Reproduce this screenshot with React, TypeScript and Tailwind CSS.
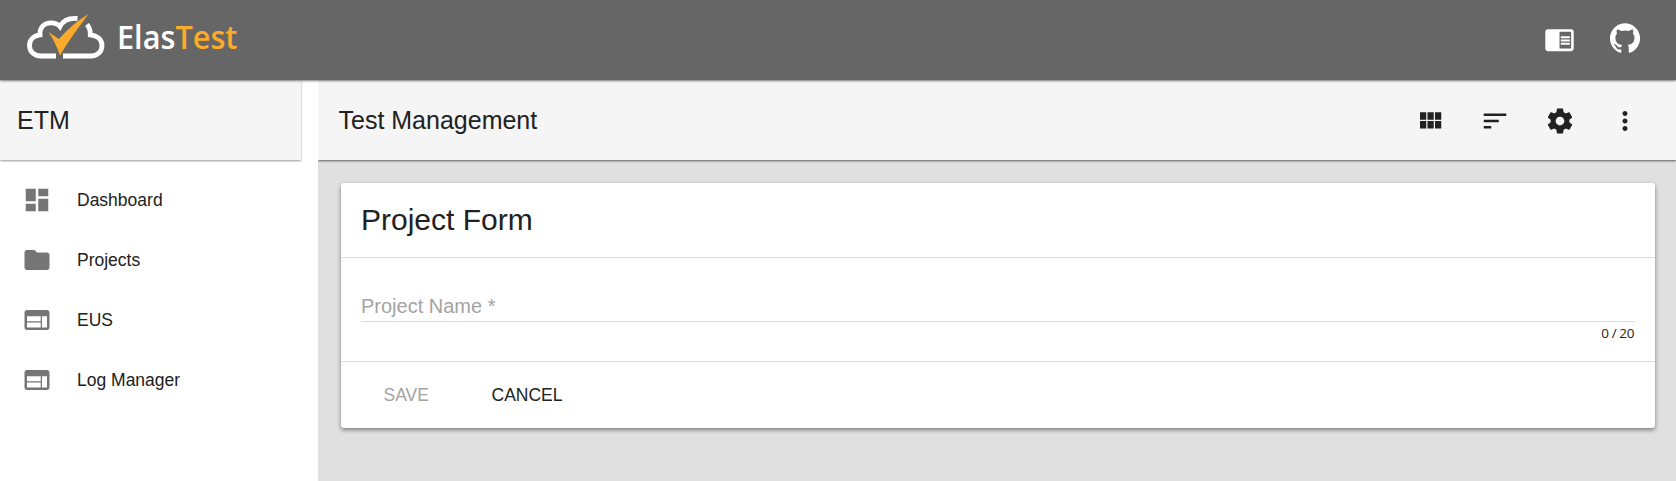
import React from "react";
import { MdChromeReaderMode, MdDashboard, MdFolder, MdMoreVert, MdSort, MdWeb } from "react-icons/md";

const navItems = [
  { label: "Dashboard", Icon: MdDashboard },
  { label: "Projects", Icon: MdFolder },
  { label: "EUS", Icon: MdWeb },
  { label: "Log Manager", Icon: MdWeb },
];

function ModuleIcon() {
  return (
    <svg viewBox="0 0 24 24" className="size-[30px]" fill="currentColor">
      <path d="M4 11h5V5H4v6zm0 7h5v-6H4v6zm6 0h5v-6h-5v6zm6 0h5v-6h-5v6zm-6-7h5V5h-5v6zm6-6v6h5V5h-5z" />
    </svg>
  );
}

function GearIcon() {
  return (
    <svg viewBox="0 0 24 24" className="size-[30px]" fill="currentColor">
      <path d="M19.43 12.98c.04-.32.07-.64.07-.98s-.03-.66-.07-.98l2.11-1.65c.19-.15.24-.42.12-.64l-2-3.46c-.12-.22-.39-.3-.61-.22l-2.49 1c-.52-.4-1.08-.73-1.69-.98l-.38-2.65C14.46 2.18 14.25 2 14 2h-4c-.25 0-.46.18-.49.42l-.38 2.65c-.61.25-1.17.59-1.69.98l-2.49-1c-.23-.09-.49 0-.61.22l-2 3.46c-.13.22-.07.49.12.64l2.11 1.65c-.04.32-.07.65-.07.98s.03.66.07.98l-2.11 1.65c-.19.15-.24.42-.12.64l2 3.46c.12.22.39.3.61.22l2.49-1c.52.4 1.08.73 1.69.98l.38 2.65c.03.24.24.42.49.42h4c.25 0 .46-.18.49-.42l.38-2.65c.61-.25 1.17-.59 1.69-.98l2.49 1c.23.09.49 0 .61-.22l2-3.46c.12-.22.07-.49-.12-.64l-2.11-1.65zM12 15.5c-1.93 0-3.5-1.57-3.5-3.5s1.57-3.5 3.5-3.5 3.5 1.57 3.5 3.5-1.57 3.5-3.5 3.5z" />
    </svg>
  );
}

function GithubIcon() {
  return (
    <svg viewBox="0 0 24 24" className="size-[30px]" fill="currentColor">
      <path d="M12 .3a12 12 0 0 0-3.8 23.4c.6.1.8-.3.8-.6v-2c-3.3.7-4-1.6-4-1.6-.6-1.4-1.4-1.8-1.4-1.8-1-.7.1-.7.1-.7 1.2 0 1.9 1.2 1.9 1.2 1 1.8 2.8 1.3 3.5 1 0-.8.4-1.3.7-1.6-2.7-.3-5.5-1.3-5.5-6 0-1.2.5-2.3 1.3-3.1-.2-.4-.6-1.6 0-3.2 0 0 1-.3 3.4 1.2a11.5 11.5 0 0 1 6 0c2.3-1.5 3.3-1.2 3.3-1.2.6 1.6.2 2.8 0 3.2.9.8 1.3 1.9 1.3 3.2 0 4.6-2.8 5.6-5.5 5.9.5.4.9 1 .9 2.2v3.3c0 .3.1.7.8.6A12 12 0 0 0 12 .3" />
    </svg>
  );
}

function Logo() {
  return (
    <svg viewBox="0 0 250 80" className="h-20 w-[250px]">
      <g fill="none" stroke="#fff" strokeWidth="4.8">
        <path d="M56 56H41C34 56 29.5 51.5 29.5 45.5C29.5 39.5 34 35.5 40 34.8C39.5 27 44.5 22.8 51 22.8C55 22.8 58 24 60 26.5C63 20.5 69 17.8 77.500 18.500" />
        <path d="M87 24.5C89.5 27.5 90.5 31 90.3 34.8C97 35.5 102 39.5 102 45.5C102 51.5 97.5 56 91 56H63" />
      </g>
      <path d="M48.5 32L59 39C67 30 77 21 88.500 14C79 27 69 40 60 55.500C57 47 53.500 39 48.500 32Z" fill="#fbab2c" />
      <text x="117" y="49.300" className="font-['Open_Sans',sans-serif] text-[32px] font-semibold" textLength="120.500" lengthAdjust="spacingAndGlyphs">
        <tspan fill="#fff">Elas</tspan><tspan fill="#fbab2c">Test</tspan>
      </text>
    </svg>
  );
}

export default function App() {
  return (
    <div className="flex h-[481px] w-[1676px] flex-col overflow-hidden bg-white font-['Liberation_Sans',Arial,sans-serif] text-[#212121]">
      <header className="relative z-10 flex h-20 shrink-0 items-center justify-between bg-[#666] pr-9 text-white shadow-[0_1px_2px_rgba(0,0,0,0.5)]">
        <Logo />
        <div className="mb-1 flex items-center gap-[35px]">
          <MdChromeReaderMode className="mt-[2px] size-[31px]" />
          <GithubIcon />
        </div>
      </header>
      <div className="flex min-h-0 flex-1">
        <aside className="w-[318px] shrink-0">
          <div className="flex h-20 w-[301px] items-center bg-[#f5f5f5] pl-[17px] pt-[2px] text-[25px] shadow-[0_1px_2px_rgba(0,0,0,0.4)]">ETM</div>
          <nav className="pt-[10px]">
            {navItems.map(({ label, Icon }) => (
              <a key={label} className="flex h-[60px] items-center gap-[25px] pl-[22px] text-[17.5px]">
                <Icon className="size-[30px] text-[#757575]" />
                {label}
              </a>
            ))}
          </nav>
        </aside>
        <main className="flex min-w-0 flex-1 flex-col overflow-hidden bg-[#e0e0e0]">
          <div className="flex h-20 shrink-0 items-center justify-between bg-[#f5f5f5] pl-[20.5px] pr-[36.5px] pt-[2px] shadow-[0_1px_2px_rgba(0,0,0,0.6)]">
            <h1 className="text-[25px]">Test Management</h1>
            <div className="flex items-center gap-[35px]">
              <ModuleIcon />
              <MdSort className="size-[30px]" />
              <GearIcon />
              <MdMoreVert className="size-[30px]" />
            </div>
          </div>
          <section className="ml-[23px] mr-[21px] mt-[23px] h-[245px] rounded-[3px] bg-white shadow-[0_2px_4px_rgba(0,0,0,0.45)]">
            <h2 className="flex h-[75px] items-center border-b border-[#dcdcdc] pb-[2px] pl-5 text-[30px]">Project Form</h2>
            <div className="h-[104px] border-b border-[#dcdcdc] px-5 pt-[33px]">
              <div className="flex h-[31px] items-center border-b border-[#dcdcdc] text-[20px] text-[#a3a3a3]">Project Name *</div>
              <div className="mt-px pr-px text-right font-['Open_Sans',sans-serif] text-[13.5px] leading-5 tracking-[-0.4px]">0 / 20</div>
            </div>
            <div className="flex h-[66px] items-center pl-[42.5px] text-[17.5px]">
              <span className="w-[108px] text-[#a3a3a3]">SAVE</span>
              <span>CANCEL</span>
            </div>
          </section>
        </main>
      </div>
    </div>
  );
}
